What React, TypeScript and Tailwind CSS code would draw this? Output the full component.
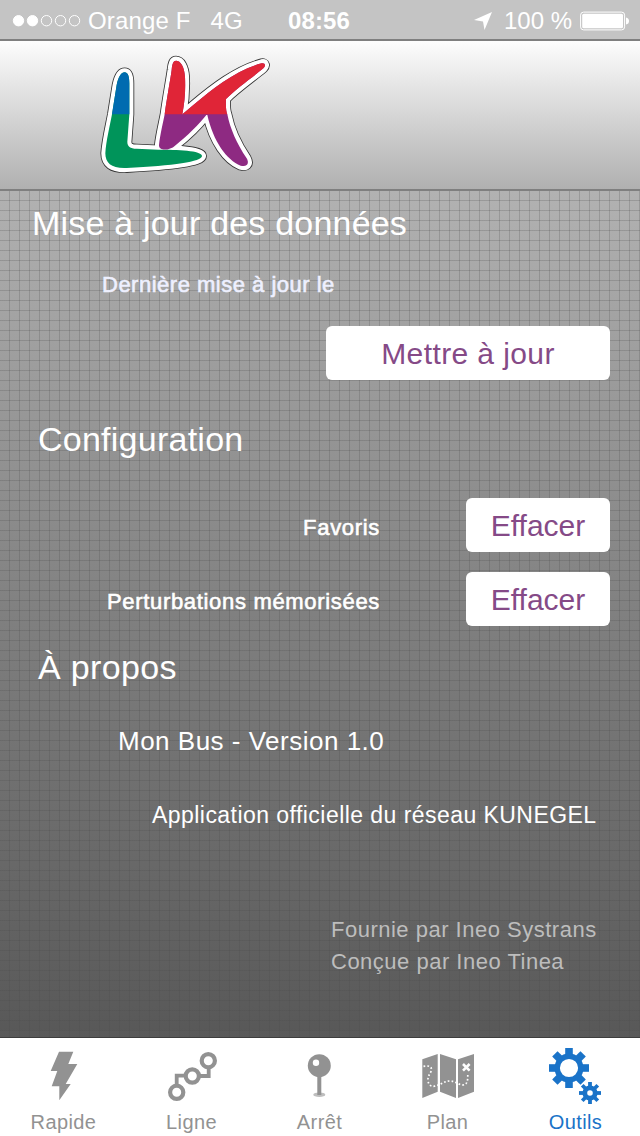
import type { ReactNode } from 'react';
import clsx from 'clsx';

const teeth = [0, 45, 90, 135, 180, 225, 270, 315];

function StatusBar() {
  return (
    <div className="flex h-[41px] shrink-0 items-center border-b-2 border-[#7f7f7f] bg-[#c4c4c4] pt-0.5 text-2xl text-white">
      <div className="flex flex-1 items-center pl-3">
        <svg width="70" height="14" viewBox="0 0 70 14" fill="none" stroke="white">
          <circle cx="6.5" cy="6.7" r="5.2" fill="white" />
          <circle cx="20.5" cy="6.7" r="5.2" fill="white" />
          <circle cx="34.5" cy="6.7" r="5.2" />
          <circle cx="48.5" cy="6.7" r="5.2" />
          <circle cx="62.5" cy="6.7" r="5.2" />
        </svg>
        <span className="ml-1.5 tracking-[0.15px]">Orange F</span>
        <span className="ml-5">4G</span>
      </div>
      <span className="mr-[3px] font-bold tracking-[0.1px]">08:56</span>
      <div className="flex flex-1 items-center justify-end pr-[11px]">
        <svg width="20" height="20" viewBox="0 0 20 20" fill="white">
          <path d="M19 1 L11.5 19 L10 10.5 L1 9 Z" />
        </svg>
        <span className="ml-[11px]">100 %</span>
        <svg className="ml-2" width="49" height="20" viewBox="0 0 49 20" fill="white">
          <rect x="0.6" y="1.1" width="44" height="17.8" rx="3" fill="none" stroke="white" />
          <rect x="2.2" y="2.7" width="40.8" height="14.6" rx="1.5" />
          <path d="M46 6.5 Q49 7 49 10 Q49 13 46 13.5 Z" />
        </svg>
      </div>
    </div>
  );
}

const L_PATH =
  'M104 82 C113 82 118 92 118 115 L118 208 L112 290 C112 304 120 311 140 311 L205 314 C260 314 336 316 336 333 C336 350 250 362 110 369 C65 371 46 355 46 325 C48 290 60 240 66 208 L80 120 C85 95 94 82 104 82 Z';
const K_PATH =
  'M258 47 C272 47 283 65 285 95 C287 140 284 170 277 208 L310 180 C370 130 440 75 515 55 C526 53 528 62 520 70 C490 95 440 130 408 162 C407 190 409 200 412 208 C420 250 440 295 470 340 C480 358 468 367 452 362 C410 345 370 290 352 210 L349 210 C330 235 290 275 255 302 C240 316 206 320 207 300 C210 270 220 230 224 208 C232 150 240 110 245 75 C247 55 250 47 258 47 Z';

function Logo() {
  return (
    <svg width="190" height="140" viewBox="0 0 570 420" strokeLinejoin="round">
      <defs>
        <clipPath id="top">
          <rect width="570" height="208" />
        </clipPath>
      </defs>
      <g fill="#333" stroke="#333" strokeWidth="29.5">
        <path d={L_PATH} />
        <path d={K_PATH} />
      </g>
      <g fill="white" stroke="white" strokeWidth="24.5">
        <path d={L_PATH} />
        <path d={K_PATH} />
      </g>
      <path d={L_PATH} fill="#00945a" />
      <path d={L_PATH} fill="#006bb0" clipPath="url(#top)" />
      <path d={K_PATH} fill="#8e2a82" />
      <path d={K_PATH} fill="#e02537" clipPath="url(#top)" />
    </svg>
  );
}

function Button({ className, children }: { className: string; children: ReactNode }) {
  return (
    <button
      className={clsx(
        'h-[54px] shrink-0 rounded-md bg-white pt-px text-[30px] leading-[54px] text-[#854a87]',
        className
      )}
    >
      {children}
    </button>
  );
}

function Row({ label }: { label: string }) {
  return (
    <div className="flex items-center justify-end pr-[30px]">
      <span className="mr-[86px] pt-1.5 text-[22px] leading-7 tracking-[0.68px] [-webkit-text-stroke:0.6px_white]">
        {label}
      </span>
      <Button className="w-36">Effacer</Button>
    </div>
  );
}

function BoltIcon() {
  return (
    <path d="M27 5.7 H41.3 L36.3 18 H45.3 L33.7 38 H38.7 L27.3 54.3 V40.3 H19.7 L25.3 25 H18.7 Z" />
  );
}

function LineIcon() {
  return (
    <g fill="none" stroke="currentColor" strokeWidth="4.2">
      <circle cx="48.3" cy="14.7" r="6.6" />
      <circle cx="32.3" cy="30" r="6.6" />
      <circle cx="16.7" cy="46.3" r="6.6" />
      <path d="M16.7 39 V29.7 H25 M39.5 30 H48.7 V22" strokeWidth="3.8" />
    </g>
  );
}

function PinIcon() {
  return (
    <>
      <ellipse cx="31.3" cy="48.7" rx="6" ry="2.3" opacity="0.6" />
      <rect x="29.3" y="28" width="4" height="21" />
      <circle cx="31.3" cy="19.7" r="11.5" />
      <circle cx="28" cy="16.7" r="3.2" fill="white" />
    </>
  );
}

function MapIcon() {
  return (
    <>
      <path d="M6.3 13.3 L21.7 8 V45.7 L6.3 52 Z M24 8 L40 13.3 V52 L24 45.7 Z M42 13.3 L58 8 V45.7 L42 52 Z" />
      <g fill="none" stroke="white">
        <path
          d="M7.5 20.3 C12 19.5 16.5 20 15.2 25 C14 28.5 11.5 30 12 34.5 C12.4 39 15 40.7 18.5 40.2 C24 39.3 28 35 34 35 C39.5 35.2 42 38.7 47 39 C51.5 38.5 52 34.5 51.7 27"
          strokeWidth="1.7"
          strokeDasharray="1.7 2.1"
        />
        <path d="M47 18 L53.6 24.6 M53.6 18 L47 24.6" strokeWidth="2.6" />
      </g>
    </>
  );
}

function GearsIcon() {
  return (
    <g fill="none" stroke="currentColor">
      <circle cx="25" cy="22" r="11.8" strokeWidth="5.4" />
      <circle cx="46" cy="47" r="5.2" strokeWidth="4.8" />
      {teeth.map((a) => (
        <g key={a}>
          <path d="M25 2 V10" strokeWidth="7.6" transform={`rotate(${a} 25 22)`} />
          <path d="M46 36 V41" strokeWidth="3.8" transform={`rotate(${a} 46 47)`} />
        </g>
      ))}
    </g>
  );
}

const tabs = [
  { name: 'Rapide', icon: <BoltIcon /> },
  { name: 'Ligne', icon: <LineIcon /> },
  { name: 'Arrêt', icon: <PinIcon /> },
  { name: 'Plan', icon: <MapIcon /> },
  { name: 'Outils', icon: <GearsIcon />, active: true },
];

function TabBar() {
  return (
    <nav className="flex h-[99px] shrink-0 border-t border-[#3c3c3c] bg-white">
      {tabs.map((tab) => (
        <div
          key={tab.name}
          className={clsx(
            'flex flex-1 flex-col items-center pt-2',
            tab.active ? 'text-[#1a73c8]' : 'text-[#929292]'
          )}
        >
          <svg className="shrink-0" width="64" height="60" viewBox="0 0 64 60" fill="currentColor">
            {tab.icon}
          </svg>
          <span className="mt-1 mr-px text-xl leading-6 tracking-[0.4px]">{tab.name}</span>
        </div>
      ))}
    </nav>
  );
}

export default function App() {
  return (
    <div className="flex h-[1136px] w-[640px] flex-col overflow-hidden font-['Liberation_Sans',Arial,sans-serif]">
      <StatusBar />
      <header className="h-[150px] shrink-0 border-b-2 border-[#7f7f7f] bg-linear-to-b from-[#fdfdfd] to-[#b0b0b0] pt-1 pl-[90px]">
        <Logo />
      </header>

      <main className="flex-1 bg-linear-to-b from-[#b2b2b2] via-[#808080] to-[#585858]">
        {/* thin squared-paper lines, one every 10px */}
        <div className="flex h-full flex-col bg-[linear-gradient(to_right,transparent_9px,#4b4b4b3c_9px),linear-gradient(to_bottom,#4b4b4b3c_1px,transparent_1px)] bg-[size:10px_10px] bg-[position:0_0,0_9px] text-white">
          <h2 className="mt-3 pl-8 text-[34px] leading-10 tracking-[0.2px]">
            Mise à jour des données
          </h2>
          <p className="mt-7 pl-[102px] text-[22px] leading-7 tracking-[0.5px] text-[#eef0ff] [-webkit-text-stroke:0.6px_#eef0ff]">
            Dernière mise à jour le
          </p>
          <Button className="mt-[27px] mr-[30px] w-[284px] self-end tracking-[0.4px]">
            Mettre à jour
          </Button>

          <h2 className="mt-[39px] pl-[38px] text-[34px] leading-10 tracking-[0.25px]">
            Configuration
          </h2>
          <div className="mt-[39px] flex flex-col gap-5">
            <Row label="Favoris" />
            <Row label="Perturbations mémorisées" />
          </div>

          <h2 className="mt-[21px] pl-[38px] text-[34px] leading-10 tracking-[0.35px]">À propos</h2>
          <p className="mt-[38px] pl-[118px] text-[26px] leading-8 tracking-[0.5px]">
            Mon Bus - Version 1.0
          </p>
          <p className="mt-11 pl-[152px] text-[23px] leading-7 tracking-[0.45px]">
            Application officielle du réseau KUNEGEL
          </p>
          <p className="mt-[85px] pl-[331px] text-[22px] leading-8 tracking-[0.5px] text-[#bdbdbd]">
            Fournie par Ineo Systrans
            <br />
            Conçue par Ineo Tinea
          </p>
        </div>
      </main>

      <TabBar />
    </div>
  );
}
